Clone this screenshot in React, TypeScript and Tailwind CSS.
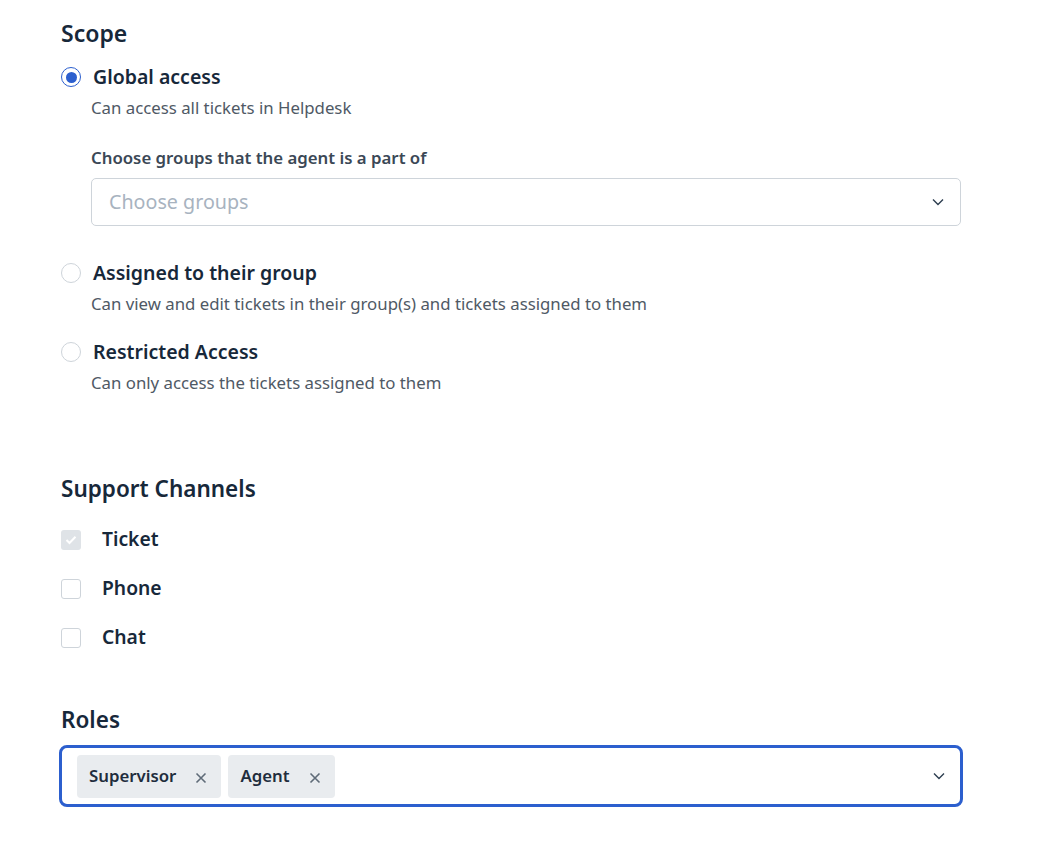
import React from "react";

const font = { fontFamily: '"Noto Sans", "Open Sans", sans-serif' };

function Chevron() {
  return (
    <svg width="12" height="8" viewBox="0 0 12 8" fill="none">
      <path d="M1 1.5 L6 6.5 L11 1.5" stroke="#2d3e50" strokeWidth="1.4" />
    </svg>
  );
}

function Radio({ checked }: { checked?: boolean }) {
  return (
    <span
      className={
        checked
          ? "flex h-[20px] w-[20px] shrink-0 items-center justify-center rounded-full border-[1.5px] border-[#2c5fce] bg-white"
          : "flex h-[20px] w-[20px] shrink-0 items-center justify-center rounded-full border border-[#ced4da] bg-white"
      }
    >
      {checked && <span className="h-[11px] w-[11px] rounded-full bg-[#2c5fce]" />}
    </span>
  );
}

function RadioOption({
  checked,
  title,
  desc,
  children,
}: {
  checked?: boolean;
  title: string;
  desc: string;
  children?: React.ReactNode;
}) {
  return (
    <div className="flex flex-col">
      <div className="flex h-[28px] items-center gap-[12px]">
        <Radio checked={checked} />
        <span className="text-[19.5px] font-semibold leading-[28px] text-[#17283a]">{title}</span>
      </div>
      <div className="mt-[4px] pl-[30px] text-[16.8px] leading-[26px] text-[#4f5965]">{desc}</div>
      {children}
    </div>
  );
}

function Check({ checked, disabled }: { checked?: boolean; disabled?: boolean }) {
  return (
    <span
      className={
        disabled
          ? "flex h-[20px] w-[20px] items-center justify-center rounded-[3px] bg-[#dfe3e7]"
          : "flex h-[20px] w-[20px] items-center justify-center rounded-[3px] border border-[#ced4da] bg-white"
      }
    >
      {checked && (
        <svg width="12" height="10" viewBox="0 0 12 10" fill="none">
          <path d="M1.5 5 L4.5 8 L10.5 1.8" stroke="white" strokeWidth="2" />
        </svg>
      )}
    </span>
  );
}

function CheckRow({ label, checked, disabled }: { label: string; checked?: boolean; disabled?: boolean }) {
  return (
    <div className="flex h-[49px] items-center gap-[21px]">
      <Check checked={checked} disabled={disabled} />
      <span className="text-[19.3px] font-semibold text-[#17283a]">{label}</span>
    </div>
  );
}

function Tag({ label }: { label: string }) {
  return (
    <div className="flex h-[43px] items-center rounded-[4px] bg-[#e9ecef] pl-[12px] pr-[14px]">
      <span className="text-[16.8px] font-semibold text-[#1f2d3d]">{label}</span>
      <svg className="ml-[19px] mt-[4px]" width="12" height="12" viewBox="0 0 12 12" fill="none">
        <path d="M1.5 1.5 L10.5 10.5 M10.5 1.5 L1.5 10.5" stroke="#5f6b78" strokeWidth="1.6" />
      </svg>
    </div>
  );
}

export default function App() {
  return (
    <div className="min-h-[850px] w-[1048px] bg-white" style={font}>
      <div className="flex w-[961px] flex-col pl-[61px] pt-[17px]">
        <h2 className="text-[23px] font-semibold leading-[32px] text-[#17283a]">Scope</h2>
        <div className="mt-[14px] flex flex-col gap-[21px]">
          <RadioOption checked title="Global access" desc="Can access all tickets in Helpdesk">
            <div className="mb-[12px] mt-[25px] pl-[30px]">
              <div className="text-[16.8px] font-semibold leading-[24px] text-[#3b4856]">
                Choose groups that the agent is a part of
              </div>
              <div className="mt-[8px] flex h-[48px] items-center justify-between rounded-[5px] border border-[#ced4da] pl-[17px] pr-[16px]">
                <span className="text-[19.7px] text-[#a8b3bf]">Choose groups</span>
                <Chevron />
              </div>
            </div>
          </RadioOption>
          <RadioOption
            title="Assigned to their group"
            desc="Can view and edit tickets in their group(s) and tickets assigned to them"
          />
          <RadioOption title="Restricted Access" desc="Can only access the tickets assigned to them" />
        </div>

        <h2 className="mt-[77px] text-[22.5px] font-semibold leading-[32px] text-[#17283a]">Support Channels</h2>
        <div className="mt-[10px] flex flex-col">
          <CheckRow label="Ticket" checked disabled />
          <CheckRow label="Phone" />
          <CheckRow label="Chat" />
        </div>

        <h2 className="mt-[42px] text-[22.5px] font-semibold leading-[32px] text-[#17283a]">Roles</h2>
        <div className="-ml-[2px] mt-[9px] flex h-[62px] w-[904px] items-center justify-between rounded-[8px] border-[3px] border-[#2c5fce] pl-[15px] pr-[15px]">
          <div className="flex gap-[7px]">
            <Tag label="Supervisor" />
            <Tag label="Agent" />
          </div>
          <Chevron />
        </div>
      </div>
    </div>
  );
}
